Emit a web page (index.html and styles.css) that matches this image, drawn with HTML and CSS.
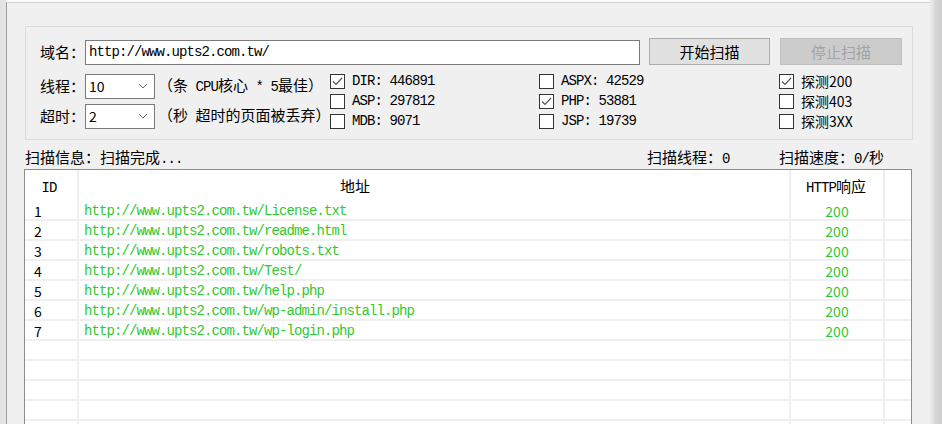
FILE: index.html
```html
<!DOCTYPE html>
<html>
<head>
<meta charset="utf-8">
<link rel="stylesheet" href="styles.css">
</head>
<body>
<div class="screen">
  <div class="lstrip"></div>
  <div class="win">
    <div class="group">
      <div class="row1">
        <span class="lbl">域名：</span>
        <div class="input m">http://www.upts2.com.tw/</div>
        <div class="btn">开始扫描</div>
        <div class="btn dis">停止扫描</div>
      </div>
      <div class="opts">
        <div class="leftopts">
          <div class="orow">
            <span class="lbl">线程：</span>
            <div class="select"><span>10</span><svg class="chev" width="10" height="6" viewBox="0 0 10 6"><polyline points="1,1 5,5 9,1" fill="none" stroke="#6a6a6a" stroke-width="1"/></svg></div>
            <span class="hint">（条<span class="m"> CPU</span>核心<span class="m"> * 5</span>最佳）</span>
          </div>
          <div class="orow">
            <span class="lbl">超时：</span>
            <div class="select"><span>2</span><svg class="chev" width="10" height="6" viewBox="0 0 10 6"><polyline points="1,1 5,5 9,1" fill="none" stroke="#6a6a6a" stroke-width="1"/></svg></div>
            <span class="hint">（秒<span class="m"> </span>超时的页面被丢弃）</span>
          </div>
        </div>
        <div class="ccol c1">
          <div class="cb"><span class="box"><svg width="13" height="13" viewBox="0 0 13 13"><polyline points="2,6.5 5,9.5 11,3" fill="none" stroke="#555" stroke-width="1.2"/></svg></span><span class="m">DIR: 446891</span></div>
          <div class="cb"><span class="box"></span><span class="m">ASP: 297812</span></div>
          <div class="cb"><span class="box"></span><span class="m">MDB: 9071</span></div>
        </div>
        <div class="ccol c2">
          <div class="cb"><span class="box"></span><span class="m">ASPX: 42529</span></div>
          <div class="cb"><span class="box"><svg width="13" height="13" viewBox="0 0 13 13"><polyline points="2,6.5 5,9.5 11,3" fill="none" stroke="#555" stroke-width="1.2"/></svg></span><span class="m">PHP: 53881</span></div>
          <div class="cb"><span class="box"></span><span class="m">JSP: 19739</span></div>
        </div>
        <div class="ccol c3">
          <div class="cb"><span class="box"><svg width="13" height="13" viewBox="0 0 13 13"><polyline points="2,6.5 5,9.5 11,3" fill="none" stroke="#555" stroke-width="1.2"/></svg></span><span class="ya">探测200</span></div>
          <div class="cb"><span class="box"></span><span class="ya">探测403</span></div>
          <div class="cb"><span class="box"></span><span class="ya">探测3XX</span></div>
        </div>
      </div>
    </div>
    <div class="status">
      <span>扫描信息：扫描完成<span class="m">...</span></span>
      <span>扫描线程：<span class="m">0</span></span>
      <span>扫描速度：<span class="m">0/</span>秒</span>
    </div>
    <div class="table">
      <div class="thead">
        <div class="th c-id"><span class="m">ID</span></div>
        <div class="th c-url">地址</div>
        <div class="th c-code"><span class="m">HTTP</span>响应</div>
        <div class="th"></div>
      </div>
      <div class="tr"><div class="td id">1</div><div class="td url m">http://www.upts2.com.tw/License.txt</div><div class="td code">200</div><div class="td"></div></div>
      <div class="tr"><div class="td id">2</div><div class="td url m">http://www.upts2.com.tw/readme.html</div><div class="td code">200</div><div class="td"></div></div>
      <div class="tr"><div class="td id">3</div><div class="td url m">http://www.upts2.com.tw/robots.txt</div><div class="td code">200</div><div class="td"></div></div>
      <div class="tr"><div class="td id">4</div><div class="td url m">http://www.upts2.com.tw/Test/</div><div class="td code">200</div><div class="td"></div></div>
      <div class="tr"><div class="td id">5</div><div class="td url m">http://www.upts2.com.tw/help.php</div><div class="td code">200</div><div class="td"></div></div>
      <div class="tr"><div class="td id">6</div><div class="td url m">http://www.upts2.com.tw/wp-admin/install.php</div><div class="td code">200</div><div class="td"></div></div>
      <div class="tr"><div class="td id">7</div><div class="td url m">http://www.upts2.com.tw/wp-login.php</div><div class="td code">200</div><div class="td"></div></div>
      <div class="tr"><div class="td"></div><div class="td"></div><div class="td"></div><div class="td"></div></div>
      <div class="tr"><div class="td"></div><div class="td"></div><div class="td"></div><div class="td"></div></div>
      <div class="tr"><div class="td"></div><div class="td"></div><div class="td"></div><div class="td"></div></div>
      <div class="tr"><div class="td"></div><div class="td"></div><div class="td"></div><div class="td"></div></div>
      <div class="tr"><div class="td"></div><div class="td"></div><div class="td"></div><div class="td"></div></div>
    </div>
  </div>
  <div class="rstrip"></div>
</div>
</body>
</html>
```
FILE: styles.css
```css
html, body {
  margin: 0;
  padding: 0;
}
body {
  width: 942px;
  height: 424px;
  overflow: hidden;
  background: #fafafa;
  font-family: "Noto Sans CJK SC", sans-serif;
  font-size: 15px;
  color: #000;
}
.m {
  font-family: "Liberation Mono", "Noto Sans CJK SC", monospace;
  font-size: 14px;
  letter-spacing: -0.9px;
}
.ya {
  font-size: 14px;
}
.screen {
  display: flex;
  width: 942px;
  height: 424px;
  overflow: hidden;
}
.lstrip {
  width: 6px;
  flex: none;
  background: #e4e4e4;
}
.rstrip {
  width: 12px;
  flex: none;
  background: linear-gradient(to right, #e9e9e9 0px, #e6e6e6 3px, #d6d6d6 5px, #cfcfcf 12px);
}
.win {
  width: 924px;
  flex: none;
  box-sizing: border-box;
  margin-top: 2px;
  border-left: 1px solid #9d9d9d;
  border-top: 1px solid #d2d2d2;
  background: #f0f0f0;
  padding-top: 23px;
}
.group {
  margin-left: 18px;
  width: 888px;
  height: 114px;
  box-sizing: border-box;
  border: 1px solid #dcdcdc;
  padding: 11px 0 0 14px;
}
.row1 {
  display: flex;
  align-items: center;
  height: 27px;
}
.lbl {
  width: 45px;
  flex: none;
  line-height: 20px;
  white-space: nowrap;
}
.input {
  width: 555px;
  height: 25px;
  align-self: flex-end;
  box-sizing: border-box;
  border: 1px solid #7a7a7a;
  background: #fff;
  padding-left: 3px;
  line-height: 23px;
  margin-right: 9px;
  white-space: nowrap;
}
.btn {
  width: 121px;
  height: 27px;
  box-sizing: border-box;
  border: 1px solid #adadad;
  background: #e1e1e1;
  text-align: center;
  line-height: 25px;
  margin-right: 10px;
}
.btn.dis {
  width: 122px;
  background: #cccccc;
  border-color: #bfbfbf;
  color: #a3a3a3;
  margin-right: 0;
}
.opts {
  display: flex;
  margin-top: 6px;
}
.leftopts {
  width: 290px;
  flex: none;
}
.orow {
  height: 30px;
  display: flex;
  align-items: center;
}
.select {
  width: 70px;
  height: 25px;
  flex: none;
  box-sizing: border-box;
  border: 1px solid #7a7a7a;
  background: #fff;
  padding: 0 6px 0 3px;
  display: flex;
  align-items: center;
  font-size: 14px;
  line-height: 23px;
}
.chev {
  margin-left: auto;
}
.hint {
  margin-left: 3px;
  white-space: nowrap;
  line-height: 20px;
}
.ccol {
  display: flex;
  flex-direction: column;
  flex: none;
}
.c1 { width: 209px; }
.c2 { width: 240px; }
.cb {
  height: 20px;
  display: flex;
  align-items: center;
  gap: 7px;
  white-space: nowrap;
  line-height: 20px;
}
.box {
  width: 15px;
  height: 15px;
  box-sizing: border-box;
  border: 1px solid #333;
  background: #fff;
  display: flex;
  flex: none;
}
.status {
  margin: 7px 0 0 17px;
  padding-left: 1px;
  width: 888px;
  height: 20px;
  box-sizing: border-box;
  display: grid;
  grid-template-columns: 1fr 132px 133px;
  line-height: 20px;
  white-space: nowrap;
}
.table {
  margin: 2px 0 0 17px;
  width: 888px;
  height: 270px;
  box-sizing: border-box;
  border: 1px solid #8c8c8c;
  border-bottom: none;
  background: #fff;
  overflow: hidden;
}
.thead, .tr {
  display: grid;
  grid-template-columns: 52px 710px 92px 1fr;
  column-gap: 2px;
}
.thead {
  height: 31px;
  background: #ededed;
}
.th {
  background: #fff;
  line-height: 31px;
  white-space: nowrap;
}
.c-id { text-align: center; padding-right: 4px; }
.c-url { padding-left: 261px; }
.c-code { text-align: center; padding-right: 2px; }
.tr {
  height: 20px;
  box-sizing: border-box;
  padding-bottom: 2px;
  background: #f0f0f0;
}
.td {
  background: #fff;
  padding-top: 2px;
  line-height: 16px;
  white-space: nowrap;
  font-size: 14px;
  overflow: visible;
}
.td.id { padding-left: 9px; }
.td.url { padding-left: 5px; color: #32c832; }
.td.code { text-align: center; color: #32c832; }
```
